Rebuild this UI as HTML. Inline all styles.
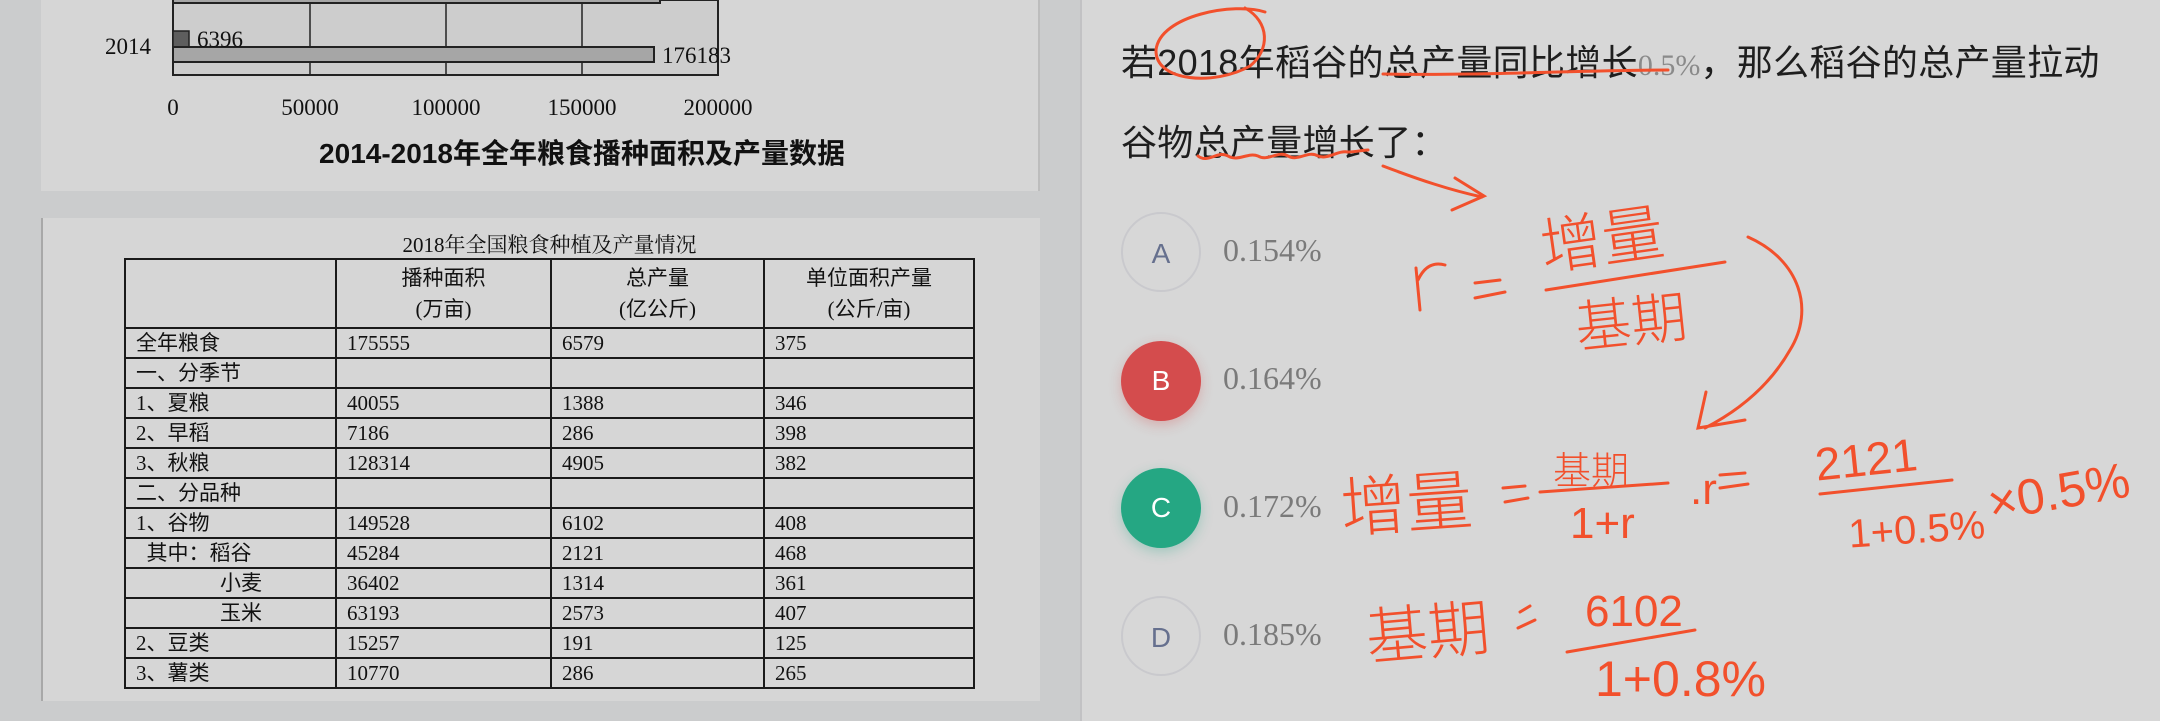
<!DOCTYPE html>
<html><head><meta charset="utf-8"><style>
*{margin:0;padding:0;box-sizing:border-box}
body{width:2160px;height:721px;overflow:hidden;background:#cbcccd;position:relative;font-family:"Liberation Serif","Noto Serif CJK SC","Noto Sans CJK SC",serif}
.abs{position:absolute}
.card{position:absolute;background:#d6d6d6}
#right{position:absolute;left:1080px;top:0;width:1080px;height:721px;background:#d7d7d7;border-left:2px solid #c2c2c4}
table{border-collapse:collapse;position:absolute;left:124px;top:258px;width:851px;font-size:21px;color:#111}
td{border:2px solid #1a1a1a;height:30px;padding:0 0 0 10px;line-height:26px;font-family:"Liberation Serif","Noto Sans CJK SC",serif;white-space:nowrap}
td.h{text-align:center;padding:0;line-height:31px}
.q{position:absolute;left:1121px;font-family:"Liberation Sans","Noto Sans CJK SC",sans-serif;font-size:36px;color:#1e1e1e;letter-spacing:0.3px;white-space:nowrap}
.q .g{font-family:"Liberation Serif",serif;color:#8a8a8a;font-size:30px;letter-spacing:0}
.opt{position:absolute;left:1121px;width:80px;height:80px;border-radius:50%;font-family:"Liberation Sans",sans-serif;font-size:28px;text-align:center;line-height:80px}
.ot{position:absolute;left:1223px;font-family:"Liberation Serif",serif;font-size:32px;color:#7a7a7a}
</style></head><body>
<div class="card" style="left:41px;top:0;width:999px;height:191px;border-right:2px solid #bdbdbd"></div>
<div class="card" style="left:41px;top:218px;width:999px;height:483px;border-left:2px solid #a8a8a8"></div>

<svg class="abs" style="left:0;top:0" width="1080" height="200">
<rect x="173" y="0" width="545" height="75" fill="#cdcdcd" stroke="#222" stroke-width="2"/>
<g stroke="#222" stroke-width="1.5"><line x1="310" y1="0" x2="310" y2="75"/><line x1="446" y1="0" x2="446" y2="75"/><line x1="582" y1="0" x2="582" y2="75"/></g>
<rect x="173" y="-4" width="487" height="7" fill="#a6a6a6" stroke="#222" stroke-width="2"/>
<rect x="173" y="31" width="16" height="16" fill="#5e5e5e" stroke="#222" stroke-width="1.5"/>
<rect x="173" y="47" width="481" height="15" fill="#a6a6a6" stroke="#222" stroke-width="2"/>
<g font-family="Liberation Serif, serif" font-size="23" fill="#111">
<text x="105" y="54">2014</text><text x="197" y="47">6396</text><text x="662" y="63">176183</text>
<text x="173" y="115" text-anchor="middle">0</text><text x="310" y="115" text-anchor="middle">50000</text><text x="446" y="115" text-anchor="middle">100000</text><text x="582" y="115" text-anchor="middle">150000</text><text x="718" y="115" text-anchor="middle">200000</text>
</g>
<text x="582" y="163" text-anchor="middle" font-family="Liberation Sans, Noto Sans CJK SC, sans-serif" font-size="28" font-weight="bold" fill="#111">2014-2018年全年粮食播种面积及产量数据</text>
</svg>

<div class="abs" style="left:124px;top:229px;width:851px;text-align:center;font-size:21px;color:#111">2018年全国粮食种植及产量情况</div>
<table>
<tr style="height:69px"><td style="width:211px"></td><td class="h" style="width:215px">播种面积<br>(万亩)</td><td class="h" style="width:213px">总产量<br>(亿公斤)</td><td class="h">单位面积产量<br>(公斤/亩)</td></tr>
<tr><td>全年粮食</td><td>175555</td><td>6579</td><td>375</td></tr>
<tr><td>一、分季节</td><td></td><td></td><td></td></tr>
<tr><td>1、夏粮</td><td>40055</td><td>1388</td><td>346</td></tr>
<tr><td>2、早稻</td><td>7186</td><td>286</td><td>398</td></tr>
<tr><td>3、秋粮</td><td>128314</td><td>4905</td><td>382</td></tr>
<tr><td>二、分品种</td><td></td><td></td><td></td></tr>
<tr><td>1、谷物</td><td>149528</td><td>6102</td><td>408</td></tr>
<tr><td>&nbsp;&nbsp;其中：稻谷</td><td>45284</td><td>2121</td><td>468</td></tr>
<tr><td style="padding-left:94px">小麦</td><td>36402</td><td>1314</td><td>361</td></tr>
<tr><td style="padding-left:94px">玉米</td><td>63193</td><td>2573</td><td>407</td></tr>
<tr><td>2、豆类</td><td>15257</td><td>191</td><td>125</td></tr>
<tr><td>3、薯类</td><td>10770</td><td>286</td><td>265</td></tr>
</table>

<div id="right"></div>
<div class="q" style="top:34px">若2018年稻谷的总产量同比增长<span class="g">0.5%</span>，那么稻谷的总产量拉动</div>
<div class="q" style="top:114px">谷物总产量增长了：</div>

<div class="opt" style="top:212px;border:2px solid #c9c9cd;color:#66708e">A</div>
<div class="opt" style="top:341px;background:#d44c4d;color:#fff;box-shadow:0 4px 12px rgba(212,76,77,.3)">B</div>
<div class="opt" style="top:468px;background:#25a783;color:#fff;box-shadow:0 4px 12px rgba(37,167,131,.3)">C</div>
<div class="opt" style="top:596px;border:2px solid #c9c9cd;color:#66708e">D</div>
<div class="ot" style="top:232px">0.154%</div>
<div class="ot" style="top:360px">0.164%</div>
<div class="ot" style="top:488px">0.172%</div>
<div class="ot" style="top:616px">0.185%</div>

<svg class="abs" style="left:0;top:0" width="2160" height="721">
<g fill="none" stroke="#f2502c" stroke-width="3" stroke-linecap="round">
<path d="M1265 12 C1235 2 1160 15 1156 50 C1155 82 1215 86 1250 66 C1270 50 1270 22 1245 8"/>
<path d="M1383 74 C1480 76 1580 70 1668 70"/>
<path d="M1198 156 c10 8 20 -6 30 0 c10 6 20 -4 30 0 c10 6 20 -6 30 0 c10 6 20 -6 30 0 c10 4 20 -6 30 -4 c8 0 15 -2 20 -2"/>
<path d="M1383 166 C1420 180 1450 190 1482 197 M1455 178 L1484 196 L1452 210"/>
<path d="M1546 290 L1725 262"/>
<path d="M1748 237 C1800 260 1815 310 1790 350 C1770 385 1740 410 1705 428 M1706 392 L1698 428 L1745 420"/>
<path d="M1540 492 L1668 483"/>
<path d="M1820 494 L1952 480"/>
<path d="M1567 652 L1695 630"/>
<path d="M1416 268 L1420 310 M1418 280 C1425 265 1435 262 1445 265"/>
<path d="M1475 283 L1500 280 M1475 298 L1505 292"/>
<path d="M1503 488 L1525 486 M1505 502 L1528 498"/>
<path d="M1720 475 L1745 473 M1720 488 L1748 484"/>
<path d="M1520 612 L1530 606 M1518 628 L1535 620"/>
</g>
<g fill="#f2502c" font-family="Noto Sans CJK SC, sans-serif" font-weight="300">
<text x="1540" y="262" font-size="62" transform="rotate(-8 1600 240)">增量</text>
<text x="1575" y="342" font-size="56" transform="rotate(-6 1630 320)">基期</text>
<text x="1340" y="528" font-size="66" transform="rotate(-4 1400 500)">增量</text>
<text x="1553" y="484" font-size="38">基期</text>
<text x="1570" y="538" font-size="44" font-family="Liberation Sans, sans-serif">1+r</text>
<text x="1690" y="504" font-size="44" font-family="Liberation Sans, sans-serif">.r</text>
<text x="1815" y="476" font-size="46" font-family="Liberation Sans, sans-serif" transform="rotate(-6 1860 460)">2121</text>
<text x="1848" y="544" font-size="40" font-family="Liberation Sans, sans-serif" transform="rotate(-4 1900 525)">1+0.5%</text>
<text x="1985" y="510" font-size="50" font-family="Liberation Sans, sans-serif" transform="rotate(-10 2050 480)">×0.5%</text>
<text x="1365" y="655" font-size="62" transform="rotate(-5 1420 625)">基期</text>
<text x="1585" y="626" font-size="44" font-family="Liberation Sans, sans-serif">6102</text>
<text x="1595" y="696" font-size="50" font-family="Liberation Sans, sans-serif">1+0.8%</text>
</g>
</svg>
</body></html>
